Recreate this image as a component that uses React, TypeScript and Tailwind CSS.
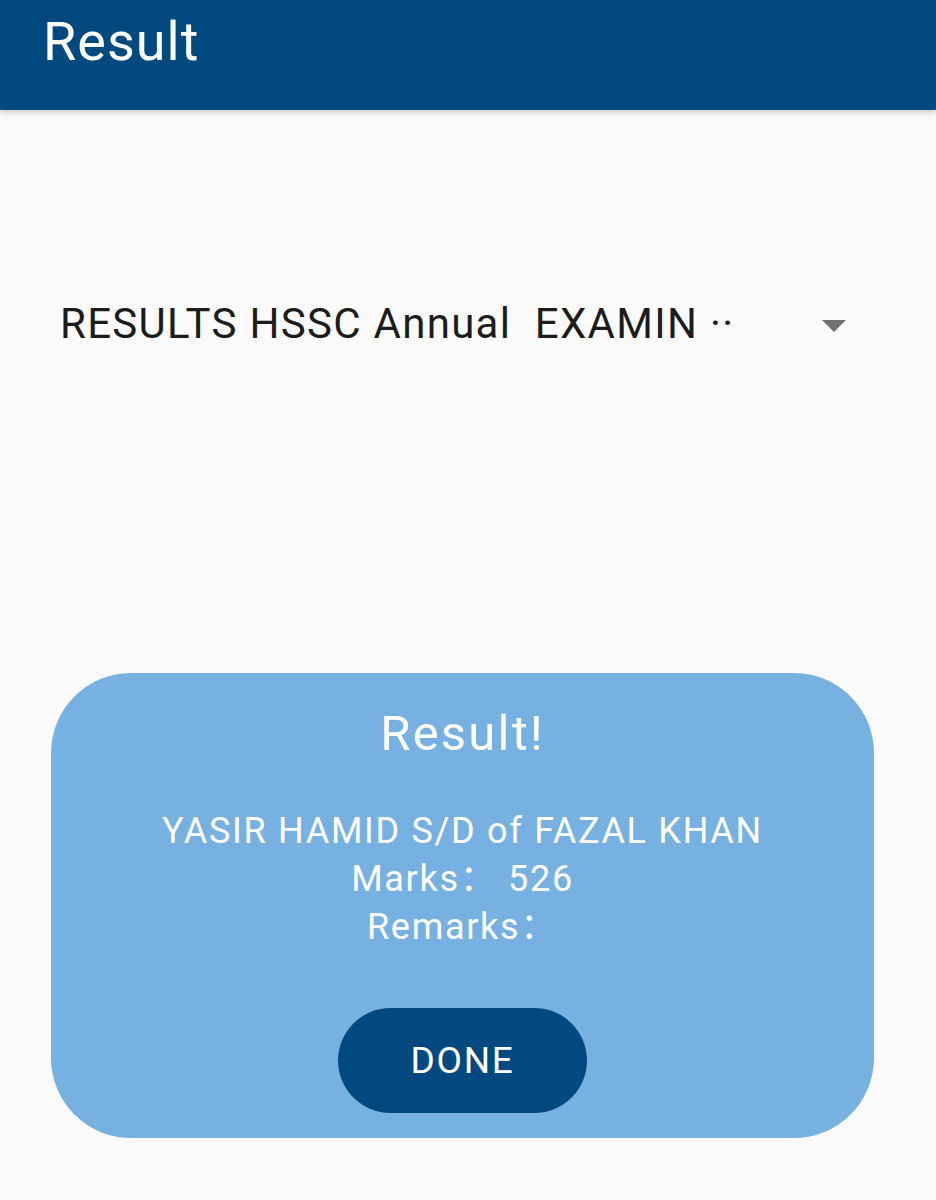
export default function App() {
  return (
    <div className="min-h-[1200px] w-full bg-[#fafafa] font-['Roboto','Noto_Sans_CJK_SC',sans-serif]">
      <header className="h-[110px] bg-[#02497f] pl-[43px] pt-[15px] shadow-[0_2px_6px_rgba(0,0,0,0.2)]">
        <h1 className="text-[54px] leading-none tracking-[1px] text-white">Result</h1>
      </header>

      <div className="mt-[193px] flex items-center justify-between pl-[60px] pr-[90px]">
        <span className="whitespace-pre text-[42px] leading-none tracking-[1.3px] text-[#1c1c1c]">RESULTS HSSC Annual  EXAMIN ··</span>
        <svg width="24" height="12" viewBox="0 0 24 12" className="mt-[4px]">
          <path d="M0 0 L24 0 L12 12 Z" fill="#707070" />
        </svg>
      </div>

      <div className="ml-[51px] mt-[328px] flex w-[823px] flex-col items-center rounded-[80px] bg-[#77b1e1] pb-[25px] pt-[36px] text-white">
        <h2 className="text-[49px] leading-none tracking-[2.2px]">Result!</h2>
        <div className="mt-[49px] flex flex-col items-center text-[36px] leading-[48px] tracking-[1.7px]">
          <p>YASIR HAMID S/D of FAZAL KHAN</p>
          <p className="whitespace-pre">Marks： 526</p>
          <p>Remarks：</p>
        </div>
        <button className="mt-[57px] flex h-[105px] w-[249px] items-center justify-center rounded-full bg-[#02497f] text-[37px] tracking-[1.7px] text-white">
          DONE
        </button>
      </div>
    </div>
  );
}
